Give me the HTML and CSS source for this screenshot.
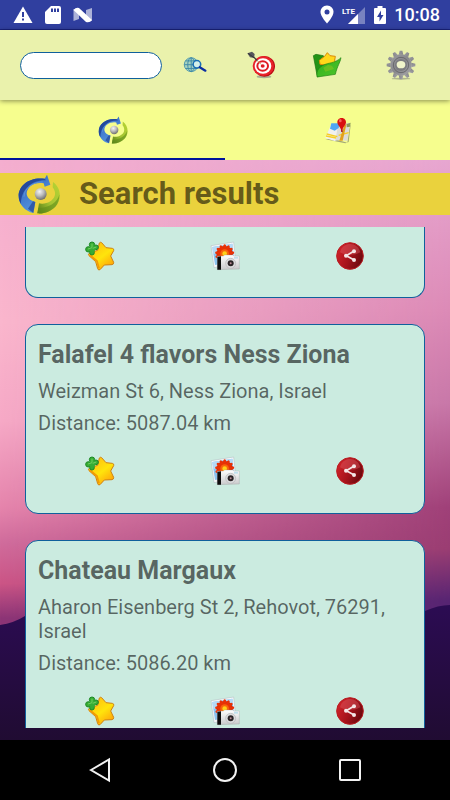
FILE: index.html
```html
<!DOCTYPE html>
<html lang="en">
<head>
  <meta charset="UTF-8">
  <meta name="viewport" content="width=device-width, initial-scale=1.0">
  <title>Search results</title>
  <link rel="stylesheet" href="styles.css">
</head>
<body>
  <!-- shared icons -->
  <svg class="sprite" aria-hidden="true">
    <defs>
      <linearGradient id="blueArrow" x1="0" y1="0" x2="0.6" y2="1">
        <stop offset="0" stop-color="#2a55a8"/>
        <stop offset="0.45" stop-color="#3f78cc"/>
        <stop offset="1" stop-color="#5b9be0"/>
      </linearGradient>
      <linearGradient id="greenArrow" x1="1" y1="0" x2="0" y2="1">
        <stop offset="0" stop-color="#b9d433"/>
        <stop offset="0.55" stop-color="#a3c433"/>
        <stop offset="1" stop-color="#537a14"/>
      </linearGradient>
      <radialGradient id="ball" cx="0.4" cy="0.3" r="0.7">
        <stop offset="0" stop-color="#f4f4f4"/>
        <stop offset="0.5" stop-color="#bdbdbd"/>
        <stop offset="1" stop-color="#6e6e6e"/>
      </radialGradient>
      <linearGradient id="starFill" x1="0" y1="0" x2="0.7" y2="1">
        <stop offset="0" stop-color="#ffb412"/>
        <stop offset="0.6" stop-color="#ffe40c"/>
        <stop offset="1" stop-color="#ffa60a"/>
      </linearGradient>
      <linearGradient id="shareFill" x1="0" y1="0.3" x2="1" y2="0.7">
        <stop offset="0" stop-color="#d0222a"/>
        <stop offset="0.5" stop-color="#a5131b"/>
        <stop offset="1" stop-color="#64080d"/>
      </linearGradient>
      <linearGradient id="camFill" x1="0" y1="0" x2="0" y2="1">
        <stop offset="0" stop-color="#ffffff"/>
        <stop offset="1" stop-color="#c9c9cb"/>
      </linearGradient>
      <linearGradient id="gearFill" x1="0" y1="0" x2="1" y2="1">
        <stop offset="0" stop-color="#9b9b9f"/>
        <stop offset="0.5" stop-color="#88888c"/>
        <stop offset="1" stop-color="#a6a6aa"/>
      </linearGradient>
      <linearGradient id="folderFill" x1="0" y1="0" x2="1" y2="1">
        <stop offset="0" stop-color="#2fae1c"/>
        <stop offset="1" stop-color="#4fc62c"/>
      </linearGradient>
    </defs>
    <symbol id="logo" viewBox="0 0 126 120">
      <path d="M105 24 C130 42 132 78 112 98 C98 112 78 120 58 118 L63 88 C84 92 104 82 110 66 C113 56 110 48 104 40Z" fill="url(#greenArrow)"/>
      <path d="M124 62 C118 84 94 102 61 102 L58 118 C78 120 98 112 112 98 C120 88 124 76 124 62Z" fill="#5f8c1a" opacity="0.6"/>
      <path d="M87 2 L97 32 L80 38 L77 28 C50 22 27 38 26 58 C26 70 36 80 52 84 L46 117 C22 112 2 92 2 66 C2 34 34 8 80 14Z" fill="url(#blueArrow)"/>
      <path d="M80 14 C34 8 2 34 2 66 C2 76 5 84 9 90 C9 50 36 18 84 19Z" fill="#23499c"/>
      <path d="M30 104 L45 82 L52 84 L46 117Z" fill="#244a9b" opacity="0.75"/>
      <path d="M18 68 C18 44 42 24 74 24" fill="none" stroke="#6ea5e6" stroke-width="3" opacity="0.6"/>
      <circle cx="68" cy="60" r="18" fill="url(#ball)"/>
    </symbol>
    <symbol id="star" viewBox="0 0 90 90">
      <path d="M43 6 Q46 2 50 5 L63 20 L82 22 Q88 23 86 29 L77 45 L86 64 Q87 70 81 71 L58 72 L45 86 Q40 89 38 83 L32 62 L12 44 Q8 39 14 36 L38 28Z" fill="url(#starFill)" stroke="#cf8212" stroke-width="3"/>
      <path d="M14 42 L36 60 L42 82" fill="none" stroke="#f29a07" stroke-width="5"/>
      <g fill="#37ac35" stroke="#1d8a26" stroke-width="3">
        <circle cx="21" cy="11" r="8"/>
        <circle cx="33" cy="19" r="7"/>
        <circle cx="10" cy="25" r="8"/>
        <circle cx="21" cy="35" r="7"/>
      </g>
      <path d="M15 14 L28 12 L34 24 L26 34 L14 32Z" fill="#37ac35"/>
      <path d="M21 8 L21 20 L9 24 M23 22 L34 18" fill="none" stroke="#6fd05e" stroke-width="3"/>
    </symbol>
    <symbol id="photo" viewBox="0 0 90 90">
      <path d="M3 14 L71 3 L78 68 L12 80Z" fill="#f7f9fa" stroke="#b9c6c9" stroke-width="2"/>
      <path d="M7 18 L67 8 L73 62 L15 72Z" fill="#8cc4f0"/>
      <path d="M7 18 L67 8 L69 24 L9 40Z" fill="#b5daf7"/>
      <circle cx="44" cy="39" r="24" fill="#c42206"/>
      <g fill="#e83206">
        <ellipse id="petal" cx="44" cy="22" rx="5" ry="12"/>
        <use href="#petal" transform="rotate(27 44 39)"/>
        <use href="#petal" transform="rotate(54 44 39)"/>
        <use href="#petal" transform="rotate(81 44 39)"/>
        <use href="#petal" transform="rotate(-27 44 39)"/>
        <use href="#petal" transform="rotate(-54 44 39)"/>
        <use href="#petal" transform="rotate(-81 44 39)"/>
        <use href="#petal" transform="rotate(-108 44 39)"/>
      </g>
      <circle cx="44" cy="38" r="13" fill="#f7650c"/>
      <circle cx="44" cy="38" r="7" fill="#ffd21a"/>
      <path d="M22 46 L40 45 L44 42 L68 42 L72 45 L88 45 L88 84 L22 86Z" fill="url(#camFill)" stroke="#9a9a9c" stroke-width="1"/>
      <path d="M22 47 L33 46 L33 86 L22 86Z" fill="#0d0d0d"/>
      <path d="M72 47 L84 47 L84 53 L72 53Z" fill="#bfe0ee"/>
      <circle cx="62" cy="67" r="15" fill="#dcdcde" stroke="#b6b6b8" stroke-width="2"/>
      <circle cx="62" cy="67" r="9" fill="#2a2326"/>
      <circle cx="62" cy="67" r="3" fill="#b98a94"/>
    </symbol>
    <symbol id="share" viewBox="0 0 90 90">
      <circle cx="45" cy="45" r="40" fill="url(#shareFill)" stroke="#bb1c22" stroke-width="3"/>
      <path d="M15 34 C20 14 34 9 46 9 C60 9 72 18 76 34 C60 44 30 44 15 34Z" fill="#e0626a" opacity="0.4"/>
      <path d="M56 31 L34 44 L56 56" fill="none" stroke="#f4e6e6" stroke-width="5"/>
      <circle cx="57" cy="31" r="6" fill="#f4e6e6"/>
      <circle cx="33" cy="44" r="6" fill="#f4e6e6"/>
      <circle cx="57" cy="57" r="6" fill="#f4e6e6"/>
    </symbol>
  </svg>

  <header class="status">
    <div class="status-group">
      <svg width="20" height="18" viewBox="0 0 20 18"><path d="M10 0.500 L19.500 17 H0.500Z" fill="#fff"/><path d="M9 6h2v5H9zM9 12.500h2v2H9z" fill="#303f9f"/></svg>
      <svg width="16" height="18" viewBox="0 0 16 18"><path d="M6 0 H14 Q16 0 16 2 V16 Q16 18 14 18 H2 Q0 18 0 16 V6Z" fill="#fff"/><path d="M6 2.500h2v3.500H6zM9 2.500h2v3.500H9zM12 2.500h2v3.500h-2z" fill="#303f9f"/></svg>
      <svg width="20" height="16" viewBox="0 0 20 16"><path d="M0.500 2 L6 4 V12 L0.500 14Z M19 1 L13 3 V12 L19 14Z" fill="#fff" opacity="0.600"/><path d="M0.500 3 Q3 0 6 1 L19 13 Q17 16 13 15Z" fill="#fff"/></svg>
    </div>
    <div class="status-group status-right">
      <svg width="14" height="19" viewBox="0 0 14 19"><path d="M7 0.500 C3 0.500 0.500 3.500 0.500 7 C0.500 11.500 7 18.500 7 18.500 C7 18.500 13.500 11.500 13.500 7 C13.500 3.500 11 0.500 7 0.500Z" fill="#fff"/><circle cx="7" cy="7" r="2.500" fill="#303f9f"/></svg>
      <svg width="24" height="20" viewBox="0 0 24 20"><path d="M6 19 L23 2 V19Z" fill="#fff" opacity="0.350"/><path d="M6 19 L16 9 V19Z" fill="#fff"/><text class="lte" x="0" y="9">LTE</text></svg>
      <svg width="12" height="18" viewBox="0 0 12 18"><path d="M3.500 0 H8.500 V2 H11 Q12 2 12 3 V17 Q12 18 11 18 H1 Q0 18 0 17 V3 Q0 2 1 2 H3.500Z" fill="#fff"/><path d="M7 4.500 L3 11 H5.500 V15.500 L9.500 9 H7Z" fill="#303f9f"/></svg>
      <span class="clock">10:08</span>
    </div>
  </header>

  <form class="toolbar">
    <input class="search-box" type="text" aria-label="Search">
    <button class="tool" type="button" aria-label="Search online">
      <svg width="24" height="18" viewBox="0 0 76 54">
        <circle cx="26" cy="26" r="22" fill="#a7d3c0" stroke="#5299ae" stroke-width="3"/>
        <g fill="none" stroke="#3f8aa6" stroke-width="3"><ellipse cx="26" cy="26" rx="11" ry="22"/><path d="M26 4V48M4 26H48M8 14H44M8 38H44"/></g>
        <circle cx="44" cy="25" r="12" fill="#d3efe9" stroke="#1a70b4" stroke-width="5"/>
        <path d="M53 34 L71 45" stroke="#0c2fa0" stroke-width="7" stroke-linecap="round"/>
      </svg>
    </button>
    <button class="tool" type="button" aria-label="Nearby">
      <svg width="30" height="30" viewBox="0 0 90 90">
        <ellipse cx="54" cy="80" rx="22" ry="5" fill="#8b9488" opacity="0.700"/>
        <ellipse cx="55" cy="49" rx="32" ry="31" fill="#b80d14"/>
        <ellipse cx="52" cy="48" rx="32" ry="30" fill="#e8222a"/>
        <ellipse cx="51" cy="48" rx="25" ry="23" fill="#fff"/>
        <ellipse cx="50" cy="48" rx="19" ry="17" fill="#df1c24"/>
        <ellipse cx="50" cy="48" rx="13" ry="11" fill="#fff"/>
        <ellipse cx="50" cy="48" rx="6" ry="5" fill="#df1c24"/>
        <path d="M18 16 L34 32" stroke="#3b3b3b" stroke-width="4"/>
        <path d="M33 31 L46 44" stroke="#c9a060" stroke-width="3"/>
        <path d="M4 10 L18 5 L26 12 L24 24 L12 22Z" fill="#55555b"/>
        <path d="M6 10 L24 23" stroke="#222" stroke-width="2"/>
      </svg>
    </button>
    <button class="tool" type="button" aria-label="Favorites">
      <svg width="30" height="28" viewBox="0 0 90 84">
        <path d="M4 14 L12 10 L34 14 L40 22 L66 20 L70 50 L16 78Z" fill="#239415" stroke="#18720f" stroke-width="2"/>
        <path d="M22 28 L38 16 L46 5 L54 14 L70 16 L68 28 L74 40 L58 44 L24 40Z" fill="#ffd81a" stroke="#dc8a08" stroke-width="3"/>
        <path d="M16 78 C10 58 24 44 46 38 C66 34 76 30 87 20 C84 36 76 44 70 70Z" fill="url(#folderFill)" stroke="#1c8412" stroke-width="2"/>
        <path d="M34 50 L48 42 L60 44 L66 54 L40 62Z" fill="#86c31c" opacity="0.600"/>
      </svg>
    </button>
    <button class="tool tool-wide" type="button" aria-label="Settings">
      <svg width="30" height="30" viewBox="0 0 90 90">
        <ellipse cx="45" cy="86" rx="28" ry="3" fill="#999e80" opacity="0.700"/>
        <g fill="url(#gearFill)">
          <circle cx="45" cy="45" r="32"/>
          <g id="teeth"><path d="M38 14 L41 2 H49 L52 14Z M38 76 L41 88 H49 L52 76Z"/><path d="M14 38 L2 41 V49 L14 52Z M76 38 L88 41 V49 L76 52Z"/></g>
          <use href="#teeth" transform="rotate(30 45 45)"/>
          <use href="#teeth" transform="rotate(60 45 45)"/>
        </g>
        <circle cx="45" cy="45" r="23" fill="none" stroke="#69696d" stroke-width="3"/>
        <circle cx="45" cy="45" r="18" fill="#7c7c80"/>
        <ellipse cx="45" cy="44" rx="13" ry="11" fill="#f0f4cb"/>
      </svg>
    </button>
  </form>

  <nav class="tabs">
    <a class="tab active" href="#results" aria-label="Results"><svg width="30" height="28"><use href="#logo"/></svg></a>
    <a class="tab" href="#map" aria-label="Map">
      <svg width="28" height="28" viewBox="0 0 84 84">
        <path d="M4 70 L24 68 L54 76 L70 80 L78 30 L80 26 L74 78 L64 82Z" fill="#8e9270" opacity="0.800"/>
        <path d="M22 24 L42 26 L46 40 L34 76 L4 66Z" fill="#f1f1ee"/>
        <path d="M42 28 L58 24 L78 20 L70 74 L46 72 L34 74Z" fill="#dcdcd8"/>
        <path d="M22 22 L48 22 L44 36 L32 44 L18 38Z" fill="#4ea6f2"/>
        <path d="M8 54 L40 62 M6 60 L36 66 M44 58 L74 50" stroke="#f6cf25" stroke-width="4"/>
        <path d="M60 30 L68 22 L56 74 L46 74Z" fill="#e2a01c"/>
        <path d="M68 24 L80 20 L78 32 L68 34Z" fill="#8b985b"/>
        <path d="M52 26 L54 48" stroke="#8c0b0b" stroke-width="4"/>
        <path d="M53 6 C44 6 40 13 40 19 C40 28 50 32 53 48 C56 32 66 28 66 19 C66 13 62 6 53 6Z" fill="#d9100e"/>
        <ellipse cx="49" cy="14" rx="4" ry="5" fill="#f2605a"/>
      </svg>
    </a>
  </nav>

  <main class="page" id="results">
    <div class="heading">
      <svg width="42" height="40"><use href="#logo"/></svg>
      <h1>Search results</h1>
    </div>

    <div class="results">
      <article class="card card-cut">
        <div class="actions">
          <button type="button" aria-label="Add to favorites"><svg width="30" height="30"><use href="#star"/></svg></button>
          <button type="button" aria-label="Photos"><svg width="30" height="30"><use href="#photo"/></svg></button>
          <button type="button" aria-label="Share"><svg width="30" height="30"><use href="#share"/></svg></button>
        </div>
      </article>

      <article class="card">
        <h2>Falafel 4 flavors Ness Ziona</h2>
        <p>Weizman St 6, Ness Ziona, Israel</p>
        <p>Distance: 5087.04 km</p>
        <div class="actions">
          <button type="button" aria-label="Add to favorites"><svg width="30" height="30"><use href="#star"/></svg></button>
          <button type="button" aria-label="Photos"><svg width="30" height="30"><use href="#photo"/></svg></button>
          <button type="button" aria-label="Share"><svg width="30" height="30"><use href="#share"/></svg></button>
        </div>
      </article>

      <article class="card">
        <h2>Chateau Margaux</h2>
        <p>Aharon Eisenberg St 2, Rehovot, 76291, Israel</p>
        <p>Distance: 5086.20 km</p>
        <div class="actions">
          <button type="button" aria-label="Add to favorites"><svg width="30" height="30"><use href="#star"/></svg></button>
          <button type="button" aria-label="Photos"><svg width="30" height="30"><use href="#photo"/></svg></button>
          <button type="button" aria-label="Share"><svg width="30" height="30"><use href="#share"/></svg></button>
        </div>
      </article>
    </div>
  </main>

  <footer class="navbar">
    <button type="button" aria-label="Back"><svg width="26" height="26" viewBox="0 0 26 26"><path d="M4 13 L22 2.500 V23.500Z"/></svg></button>
    <button type="button" aria-label="Home"><svg width="26" height="26" viewBox="0 0 26 26"><circle cx="13" cy="13" r="11"/></svg></button>
    <button type="button" aria-label="Recent apps"><svg width="26" height="26" viewBox="0 0 26 26"><rect x="3" y="3" width="20" height="20" rx="1"/></svg></button>
  </footer>
</body>
</html>
```
FILE: styles.css
```css
* {
  box-sizing: border-box;
}
body {
  margin: 0;
  height: 100vh;
  display: flex;
  flex-direction: column;
  font-family: Roboto, sans-serif;
  color: rgba(0, 0, 0, 0.58);
  overflow: hidden;
}
button {
  border: none;
  background: none;
  padding: 0;
  cursor: pointer;
}
svg {
  display: block;
}
.sprite {
  position: absolute;
  width: 0;
  height: 0;
}

/* status bar */
.status {
  display: flex;
  justify-content: space-between;
  align-items: center;
  flex: none;
  height: 30px;
  padding: 0 10px 0 13px;
  background: #303f9f;
  border-bottom: 1px solid #1a237e;
  color: #fff;
}
.status-group {
  display: flex;
  align-items: center;
  gap: 12px;
}
.status-right {
  gap: 8px;
}
.lte {
  font-size: 8px;
  font-weight: 700;
  fill: #fff;
}
.clock {
  font-size: 18px;
  font-weight: 500;
  line-height: 20px;
}

/* toolbar */
.toolbar {
  display: flex;
  align-items: center;
  flex: none;
  height: 70px;
  padding: 0 8px 0 20px;
  background: #eaf2ac;
  box-shadow: 0 1px 5px rgba(0, 0, 0, 0.45);
  z-index: 1;
}
.search-box {
  flex: 1;
  min-width: 0;
  height: 27px;
  padding: 0 12px;
  border: 1px solid #10609c;
  border-radius: 14px;
  background: #fff;
}
.tool {
  display: flex;
  justify-content: center;
  width: 66px;
}
.tool-wide {
  width: 82px;
}

/* tabs */
.tabs {
  display: flex;
  flex: none;
  height: 60px;
  background: #f6fe8e;
}
.tab {
  flex: 1;
  display: flex;
  align-items: center;
  justify-content: center;
  border-top: 2px solid transparent;
  border-bottom: 2px solid transparent;
}
.tab.active {
  border-bottom-color: #00149b;
}

/* results */
.page {
  flex: 1;
  min-height: 0;
  display: flex;
  flex-direction: column;
  padding: 13px 0 12px;
  background: url("data:image/svg+xml,%3Csvg xmlns='http://www.w3.org/2000/svg' viewBox='0 0 450 580' preserveAspectRatio='none'%3E%3Cdefs%3E%3ClinearGradient id='l' x2='0' y2='1'%3E%3Cstop offset='0' stop-color='%23f4aecf'/%3E%3Cstop offset='.28' stop-color='%23fab6cd'/%3E%3Cstop offset='.45' stop-color='%23f6a9c6'/%3E%3Cstop offset='.6' stop-color='%23e584ac'/%3E%3Cstop offset='.66' stop-color='%23d06c9c'/%3E%3Cstop offset='.73' stop-color='%23cc5586'/%3E%3Cstop offset='.79' stop-color='%238d3576'/%3E%3C/linearGradient%3E%3ClinearGradient id='r' x2='0' y2='1'%3E%3Cstop offset='0' stop-color='%23e7a6d0'/%3E%3Cstop offset='.26' stop-color='%23dc8ab6'/%3E%3Cstop offset='.42' stop-color='%23c877a8'/%3E%3Cstop offset='.6' stop-color='%239f4078'/%3E%3Cstop offset='.67' stop-color='%239a3d72'/%3E%3Cstop offset='.76' stop-color='%23562472'/%3E%3C/linearGradient%3E%3ClinearGradient id='h'%3E%3Cstop stop-color='%23000'/%3E%3Cstop offset='1' stop-color='%23fff'/%3E%3C/linearGradient%3E%3ClinearGradient id='m' x2='0' y2='1'%3E%3Cstop stop-color='%232c0c54'/%3E%3Cstop offset='1' stop-color='%23200c32'/%3E%3C/linearGradient%3E%3Cmask id='k'%3E%3Crect width='450' height='580' fill='url(%23h)'/%3E%3C/mask%3E%3C/defs%3E%3Crect width='450' height='580' fill='url(%23l)'/%3E%3Crect width='450' height='580' fill='url(%23r)' mask='url(%23k)'/%3E%3Cpath d='M0 465Q14 463 25 456L200 440L425 451Q438 445 450 445V580H0Z' fill='url(%23m)'/%3E%3C/svg%3E") center / 100% 100% no-repeat;
}
.heading {
  display: flex;
  align-items: center;
  flex: none;
  gap: 19px;
  height: 42px;
  margin-bottom: 12px;
  padding: 0 18px;
  background: #ead23d;
}
h1 {
  margin: 0;
  font-size: 31px;
  line-height: 40px;
}
.results {
  flex: 1;
  min-height: 0;
  display: flex;
  flex-direction: column;
  gap: 26px;
  margin: 0 25px;
  overflow: hidden;
}
.card {
  flex: none;
  padding: 14px 12px 27px;
  background: #cbebe0;
  border: 1px solid #10609c;
  border-radius: 13px;
}
.card-cut {
  padding-bottom: 26px;
  border-top: none;
  border-radius: 0 0 13px 13px;
}
.card h2 {
  margin: 0 0 8px;
  font-size: 25px;
  line-height: 32px;
}
.card p {
  margin: 0 0 8px;
  font-size: 20px;
  line-height: 24px;
}
.actions {
  display: grid;
  grid-template-columns: repeat(3, 1fr);
}
.actions button {
  display: flex;
  justify-content: center;
}
.card p + .actions {
  margin-top: 21px;
}

/* navigation bar */
.navbar {
  display: grid;
  grid-template-columns: repeat(3, 1fr);
  align-items: center;
  flex: none;
  height: 60px;
  padding: 0 37px;
  background: #000;
}
.navbar button {
  display: flex;
  justify-content: center;
}
.navbar svg {
  fill: none;
  stroke: #f2f2f2;
  stroke-width: 2;
}
```
